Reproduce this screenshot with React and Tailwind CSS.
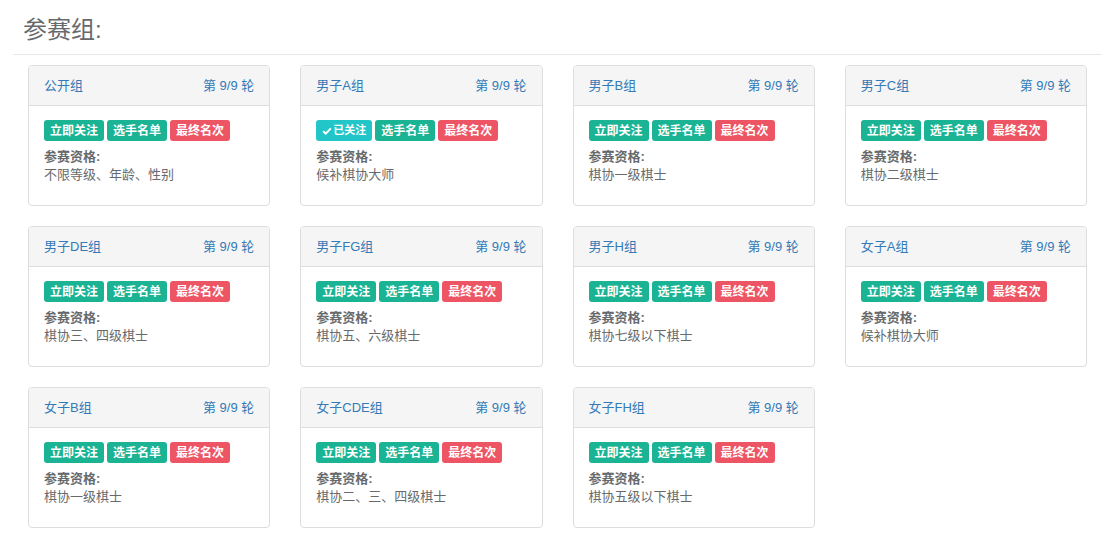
import React from "react";

const groups = [
  { name: "公开组", req: "不限等级、年龄、性别" },
  { name: "男子A组", req: "候补棋协大师", followed: true },
  { name: "男子B组", req: "棋协一级棋士" },
  { name: "男子C组", req: "棋协二级棋士" },
  { name: "男子DE组", req: "棋协三、四级棋士" },
  { name: "男子FG组", req: "棋协五、六级棋士" },
  { name: "男子H组", req: "棋协七级以下棋士" },
  { name: "女子A组", req: "候补棋协大师" },
  { name: "女子B组", req: "棋协一级棋士" },
  { name: "女子CDE组", req: "棋协二、三、四级棋士" },
  { name: "女子FH组", req: "棋协五级以下棋士" },
];

const GroupCard = ({ group }) => (
  <div className="h-[141px] bg-white border border-[#dddddd] rounded-[4px] overflow-hidden">
    <div className="h-[40px] bg-[#f5f5f5] border-b border-[#dddddd] px-[15px] flex items-center justify-between text-[13px] text-[#337ab7]">
      <span>{group.name}</span>
      <span>第 9/9 轮</span>
    </div>
    <div className="px-[15px] pt-[14px]">
      <div className="flex gap-[3px]">
        {group.followed ? (
          <span className="h-[21px] w-[56px] rounded-[3px] bg-[#23c6c8] text-white text-[11px] font-bold flex items-center justify-center">
            <svg width="10" height="10" viewBox="0 0 10 10" className="mr-[1px]">
              <path d="M1.2 5.2 L3.8 7.6 L8.8 2.4" stroke="white" strokeWidth="2" fill="none" />
            </svg>
            已关注
          </span>
        ) : (
          <span className="h-[21px] w-[60px] rounded-[3px] bg-[#1ab394] text-white text-[12px] font-bold flex items-center justify-center">
            立即关注
          </span>
        )}
        <span className="h-[21px] w-[60px] rounded-[3px] bg-[#1ab394] text-white text-[12px] font-bold flex items-center justify-center">
          选手名单
        </span>
        <span className="h-[21px] w-[60px] rounded-[3px] bg-[#ed5565] text-white text-[12px] font-bold flex items-center justify-center">
          最终名次
        </span>
      </div>
      <div className="mt-[7px] text-[13px] leading-[18px] text-[#676a6c]">
        <div className="font-bold">参赛资格:</div>
        <div>{group.req}</div>
      </div>
    </div>
  </div>
);

export default function App() {
  return (
    <div
      className="bg-white min-h-[540px] pl-[13px] pr-[5px]"
      style={{ fontFamily: '"Liberation Sans", "Noto Sans CJK SC", sans-serif' }}
    >
      <div className="border-b border-[#e7e7e7] h-[55px] flex items-end pb-[9px] px-[10px]">
        <h2 className="text-[24px] leading-[30px] text-[#676a6c]">参赛组:</h2>
      </div>
      <div className="mx-[15px] mt-[10px] grid grid-cols-4 gap-x-[30px] gap-y-[20px]">
        {groups.map((g) => (
          <GroupCard key={g.name} group={g} />
        ))}
      </div>
    </div>
  );
}
